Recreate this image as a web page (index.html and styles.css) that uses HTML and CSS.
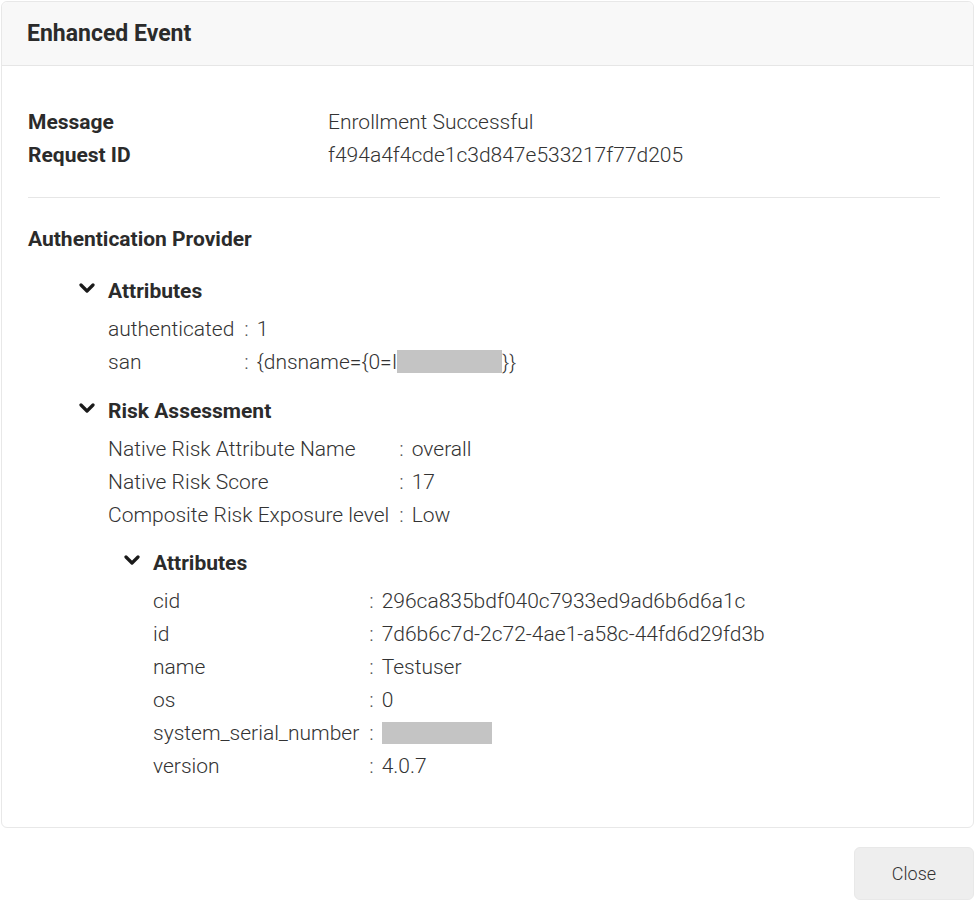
FILE: index.html
```html
<!DOCTYPE html>
<html lang="en">
<head>
  <meta charset="UTF-8">
  <title>Enhanced Event</title>
  <meta name="viewport" content="width=device-width, initial-scale=1">
  <link rel="stylesheet" href="styles.css">
</head>
<body>

<div class="card">
  <div class="card-header">
    <h3>Enhanced Event</h3>
  </div>
  <div class="card-body">
    <div class="summary">
      <div class="summary-row">
        <span class="summary-label">Message</span>
        <span class="summary-value">Enrollment Successful</span>
      </div>
      <div class="summary-row">
        <span class="summary-label">Request ID</span>
        <span class="summary-value">f494a4f4cde1c3d847e533217f77d205</span>
      </div>
    </div>

    <h4 class="section-title">Authentication Provider</h4>

    <div class="group">
      <div class="group-title">
        <svg class="chevron" viewBox="0 0 16 10"><path d="M2 2l6 6 6-6"/></svg>
        Attributes
      </div>
      <table class="kv">
        <tr><td>authenticated</td><td class="sep">:</td><td>1</td></tr>
        <tr><td>san</td><td class="sep">:</td><td>{dnsname={0=I<span class="redacted redacted-san"></span>}}</td></tr>
      </table>
    </div>

    <div class="group">
      <div class="group-title">
        <svg class="chevron" viewBox="0 0 16 10"><path d="M2 2l6 6 6-6"/></svg>
        Risk Assessment
      </div>
      <table class="kv">
        <tr><td>Native Risk Attribute Name</td><td class="sep">:</td><td>overall</td></tr>
        <tr><td>Native Risk Score</td><td class="sep">:</td><td>17</td></tr>
        <tr><td>Composite Risk Exposure level</td><td class="sep">:</td><td>Low</td></tr>
      </table>

      <div class="group nested">
        <div class="group-title">
          <svg class="chevron" viewBox="0 0 16 10"><path d="M2 2l6 6 6-6"/></svg>
          Attributes
        </div>
        <table class="kv">
          <tr><td>cid</td><td class="sep">:</td><td>296ca835bdf040c7933ed9ad6b6d6a1c</td></tr>
          <tr><td>id</td><td class="sep">:</td><td>7d6b6c7d-2c72-4ae1-a58c-44fd6d29fd3b</td></tr>
          <tr><td>name</td><td class="sep">:</td><td>Testuser</td></tr>
          <tr><td>os</td><td class="sep">:</td><td>0</td></tr>
          <tr><td>system_serial_number</td><td class="sep">:</td><td><span class="redacted redacted-serial"></span></td></tr>
          <tr><td>version</td><td class="sep">:</td><td>4.0.7</td></tr>
        </table>
      </div>
    </div>
  </div>
</div>

<div class="actions">
  <button class="btn-close">Close</button>
</div>

</body>
</html>
```

FILE: styles.css
```css
body {
  margin: 0;
  padding: 1px 6px 0 1px;
  font-family: Roboto, 'Liberation Sans', sans-serif;
  color: #333;
  background: #fff;
}

.card {
  border: 1px solid #e8e8e8;
  border-radius: 6px;
  background: #fff;
}

.card-header {
  background: #f8f8f8;
  border-bottom: 1px solid #e6e6e6;
  border-radius: 6px 6px 0 0;
  height: 63px;
  display: flex;
  align-items: center;
  padding: 0 25px;
}

.card-header h3 {
  margin: 0;
  font-size: 23px;
  font-weight: 700;
  color: #2b2b2b;
}

.card-body {
  padding: 39px 33px 45px 26px;
}

.summary {
  padding-bottom: 26px;
  border-bottom: 1px solid #e6e6e6;
}

.summary-row {
  display: flex;
  height: 33px;
  align-items: center;
  font-size: 21px;
}

.summary-label {
  width: 300px;
  font-weight: 700;
  color: #2b2b2b;
}

.summary-value {
  font-weight: 300;
  color: #333;
}

.section-title {
  margin: 26px 0 0;
  font-size: 21px;
  font-weight: 700;
  color: #2b2b2b;
  line-height: 30px;
}

.group {
  margin-left: 51px;
  margin-top: 22px;
}

.group + .group {
  margin-top: 18px;
}

.group.nested {
  margin-left: 45px;
  margin-top: 17px;
}

.group-title {
  display: flex;
  align-items: center;
  font-size: 21px;
  font-weight: 700;
  color: #2b2b2b;
  height: 30px;
}

.chevron {
  width: 16px;
  height: 10px;
  margin-right: 13px;
  margin-top: -7px;
  fill: none;
  stroke: #1a1a1a;
  stroke-width: 3.2;
  stroke-linecap: round;
  stroke-linejoin: round;
}

.kv {
  border-collapse: collapse;
  margin-left: 29px;
  margin-top: 6px;
  font-size: 21px;
  font-weight: 300;
  color: #333;
}

.kv td {
  padding: 0;
  height: 33px;
  white-space: nowrap;
}

.kv td.sep {
  padding: 0 8px 0 10px;
  color: #555;
}

.redacted {
  display: inline-block;
  background: #c4c4c4;
  vertical-align: -4px;
}

.redacted-san {
  width: 105px;
  height: 23px;
}

.redacted-serial {
  width: 110px;
  height: 22px;
}

.actions {
  display: flex;
  justify-content: flex-end;
  margin-top: 19px;
}

.btn-close {
  width: 120px;
  height: 53px;
  background: #eeeeee;
  border: 1px solid #e8e8e8;
  border-radius: 6px;
  font-family: Roboto, 'Liberation Sans', sans-serif;
  font-size: 18px;
  font-weight: 300;
  color: #333;
  cursor: pointer;
}
```
